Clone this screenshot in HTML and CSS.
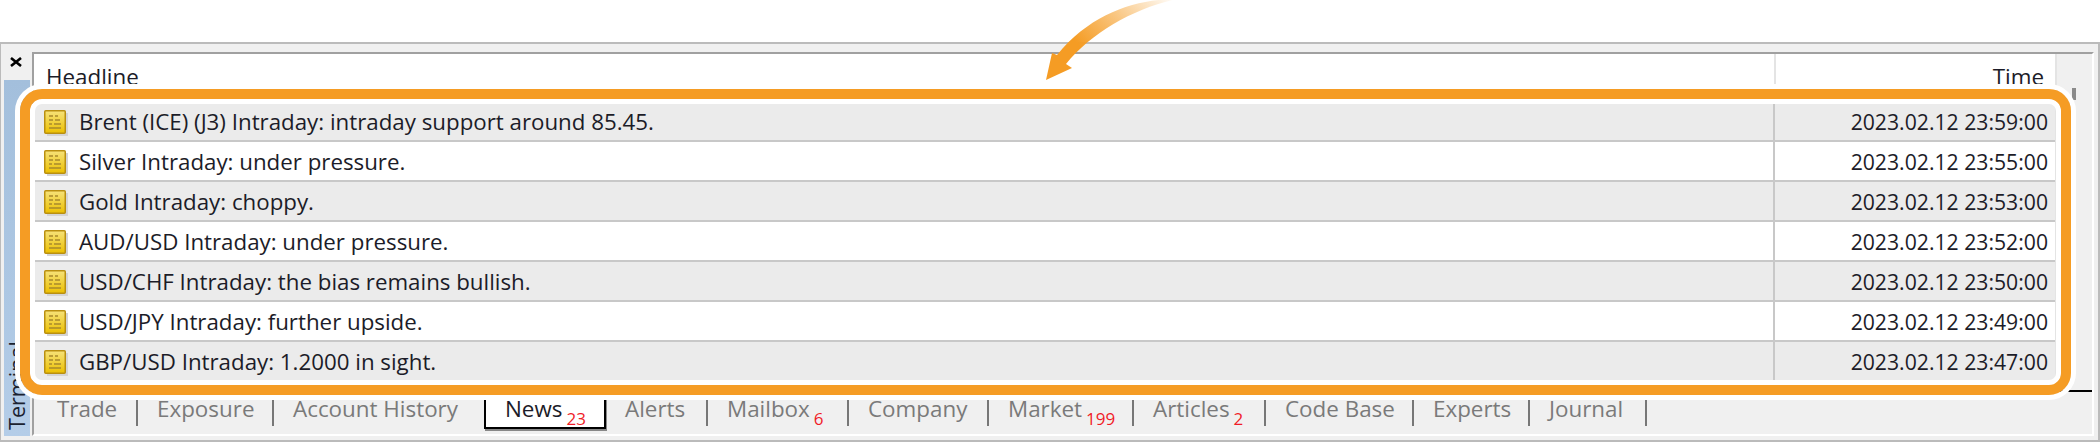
FILE: index.html
```html
<!DOCTYPE html>
<html lang="en">
<head>
    <meta charset="UTF-8">
    <title>Terminal - News</title>
    <link rel="stylesheet" href="styles.css">
</head>
<body>
    <div class="frame">
        <div class="side">
            <div class="close">
                <svg width="12" height="10" viewBox="0 0 12 10"><path d="M1 1l10 8M11 1L1 9" stroke="#000" stroke-width="2.6"/></svg>
            </div>
            <div class="side-tab"><span>Terminal</span></div>
        </div>
        <div class="panel">
            <div class="top">
                <div class="table">
                    <div class="head">
                        <div class="cell-main">Headline</div>
                        <div class="cell-time">Time</div>
                    </div>
                    <div class="row alt"><div class="cell-main"><svg class="note" viewBox="0 0 24 26"><use href="#note"/></svg>Brent (ICE) (J3) Intraday: intraday support around 85.45.</div><div class="cell-time">2023.02.12 23:59:00</div></div>
                    <div class="row"><div class="cell-main"><svg class="note" viewBox="0 0 24 26"><use href="#note"/></svg>Silver Intraday: under pressure.</div><div class="cell-time">2023.02.12 23:55:00</div></div>
                    <div class="row alt"><div class="cell-main"><svg class="note" viewBox="0 0 24 26"><use href="#note"/></svg>Gold Intraday: choppy.</div><div class="cell-time">2023.02.12 23:53:00</div></div>
                    <div class="row"><div class="cell-main"><svg class="note" viewBox="0 0 24 26"><use href="#note"/></svg>AUD/USD Intraday: under pressure.</div><div class="cell-time">2023.02.12 23:52:00</div></div>
                    <div class="row alt"><div class="cell-main"><svg class="note" viewBox="0 0 24 26"><use href="#note"/></svg>USD/CHF Intraday: the bias remains bullish.</div><div class="cell-time">2023.02.12 23:50:00</div></div>
                    <div class="row"><div class="cell-main"><svg class="note" viewBox="0 0 24 26"><use href="#note"/></svg>USD/JPY Intraday: further upside.</div><div class="cell-time">2023.02.12 23:49:00</div></div>
                    <div class="row alt"><div class="cell-main"><svg class="note" viewBox="0 0 24 26"><use href="#note"/></svg>GBP/USD Intraday: 1.2000 in sight.</div><div class="cell-time">2023.02.12 23:47:00</div></div>
                </div>
                <div class="scroll"><div class="scroll-arrow"></div></div>
            </div>
            <div class="tabs">
                <div class="tab">Trade</div>
                <div class="tab">Exposure</div>
                <div class="tab plain">Account History</div>
                <div class="tab active">News<sub>23</sub></div>
                <div class="tab">Alerts</div>
                <div class="tab">Mailbox<sub>6</sub></div>
                <div class="tab">Company</div>
                <div class="tab">Market<sub>199</sub></div>
                <div class="tab">Articles<sub>2</sub></div>
                <div class="tab">Code Base</div>
                <div class="tab">Experts</div>
                <div class="tab">Journal</div>
            </div>
        </div>
    </div>

    <!-- callout drawn over the terminal -->
    <div class="highlight"></div>
    <svg class="arrow" width="140" height="84" viewBox="0 0 140 84">
        <defs>
            <linearGradient id="fade" x1="1" y1="0" x2="0" y2="0.6">
                <stop offset="0" stop-color="#f59c24" stop-opacity="0"/>
                <stop offset="0.45" stop-color="#f59c24" stop-opacity="0.6"/>
                <stop offset="0.8" stop-color="#f59c24"/>
            </linearGradient>
        </defs>
        <path fill="url(#fade)" d="M137 -1C98 -1 52 12 17 55L12 53L6 80L32 68L26 64C52 32 95 8 137 -1Z"/>
    </svg>

    <svg width="0" height="0" class="defs">
        <defs>
            <linearGradient id="gold" x1="0" y1="0" x2="0" y2="1">
                <stop offset="0" stop-color="#f6e27a"/>
                <stop offset="1" stop-color="#ecc000"/>
            </linearGradient>
            <symbol id="note" viewBox="0 0 24 26">
                <rect x="3" y="3" width="21" height="23" fill="#d4d4d4"/>
                <rect x="0.75" y="0.75" width="20.5" height="22.5" rx="1" fill="url(#gold)" stroke="#b98f10" stroke-width="1.5"/>
                <path d="M5 6h4M11 6h3M5 10h4M11 10h5M5 14h3M10 14h7M5 18h12" stroke="#a8892c" stroke-width="1.5"/>
            </symbol>
        </defs>
    </svg>
</body>
</html>
```

FILE: styles.css
```css
body {
    margin: 0;
    width: 2100px;
    height: 442px;
    overflow: hidden;
    position: relative;
    background: #fff;
    font-family: "Open Sans", "Noto Sans", sans-serif;
    font-size: 22.4px;
    color: #1c1c28;
}

.defs {
    position: absolute;
}

.frame {
    box-sizing: border-box;
    margin-top: 42px;
    height: 400px;
    display: flex;
    background: #f0f0f0;
    border: solid #bbb;
    border-width: 2px 2px 2px 1px;
}

.side {
    width: 31px;
    flex: none;
    display: flex;
    flex-direction: column;
}

.close {
    height: 36px;
    padding: 13px 0 0 9px;
    box-sizing: border-box;
}

.close svg {
    display: block;
}

.side-tab {
    margin: 0 2px 0 3px;
    height: 356px;
    background: linear-gradient(#b4cde8, #a3bfdc);
    display: flex;
    justify-content: flex-start;
    writing-mode: vertical-rl;
    transform: rotate(180deg);
}

.side-tab span {
    margin-top: 6px;
    color: #1a2230;
    font-size: 21.6px;
    line-height: 26px;
}

.panel {
    flex: 1;
    min-width: 0;
    margin: 8px 4px 4px 0;
    display: flex;
    flex-direction: column;
    border: 2px solid #fff;
    border-top-color: #a0a0a0;
    border-left-color: #a0a0a0;
}

.top {
    display: flex;
    height: 336px;
}

.table {
    flex: 1;
    min-width: 0;
    background: #fff;
}

.head {
    height: 48px;
    display: flex;
}

.head .cell-main {
    display: block;
    padding: 9px 0 0 12px;
    border-right: 2px solid #e4e4e4;
    width: 1742px;
    flex: none;
    line-height: 28px;
}

.head .cell-time {
    padding-top: 9px;
    padding-right: 11px;
    line-height: 28px;
}

.row {
    height: 40px;
    box-sizing: border-box;
    display: flex;
    border-bottom: 2px solid #c8c8c8;
}

.alt {
    background: #ebebeb;
}

.cell-main {
    width: 1741px;
    flex: none;
    box-sizing: border-box;
    display: flex;
    align-items: center;
    gap: 11px;
    white-space: pre;
}

.row .cell-main {
    border-right: 2px solid #c8c8c8;
    font-size: 22.3px;
}

.cell-time {
    flex: 1;
    text-align: right;
    padding-right: 7px;
}

.row .cell-time {
    font-size: 21.2px;
    line-height: 40px;
}

.note {
    width: 24px;
    height: 26px;
    margin-left: 10px;
    margin-top: 4px;
    flex: none;
}

.scroll {
    width: 37px;
    flex: none;
    box-sizing: border-box;
    border-left: 2px solid #e4e4e4;
}

.scroll-arrow {
    width: 4px;
    height: 12px;
    margin: 34px 0 0 15px;
    background: #8a8a8a;
}

.tabs {
    flex: 1;
    display: grid;
    grid-template-columns: 100px 136px 210px 122px 102px 141px 140px 145px 132px 148px 116px 117px;
    align-items: start;
    border-top: 2px solid #000;
    padding-left: 4px;
}

.tab {
    box-sizing: border-box;
    height: 26px;
    margin-top: 8px;
    padding-left: 19px;
    border-right: 2px solid #777;
    color: #7a7a7a;
    line-height: 18px;
    white-space: pre;
}

.plain {
    border-right: 0;
}

.tab sub {
    font-size: 17px;
    line-height: 1;
    color: #f01c28;
    vertical-align: -8px;
    margin-left: 4px;
}

.active {
    height: 37px;
    margin-top: 0;
    padding-top: 8px;
    background: #fff;
    color: #1c1c28;
    border: 2px solid #000;
    border-top: 0;
    box-shadow: 1px 2px 0 #888;
}

.highlight {
    position: absolute;
    left: 20px;
    top: 89px;
    width: 2051px;
    height: 306px;
    box-sizing: border-box;
    border: 10px solid #f59c24;
    border-radius: 22px;
    box-shadow: 0 0 0 5px #fff, inset 0 0 0 5px #fff;
}

.arrow {
    position: absolute;
    left: 1040px;
    top: 0;
}
```
